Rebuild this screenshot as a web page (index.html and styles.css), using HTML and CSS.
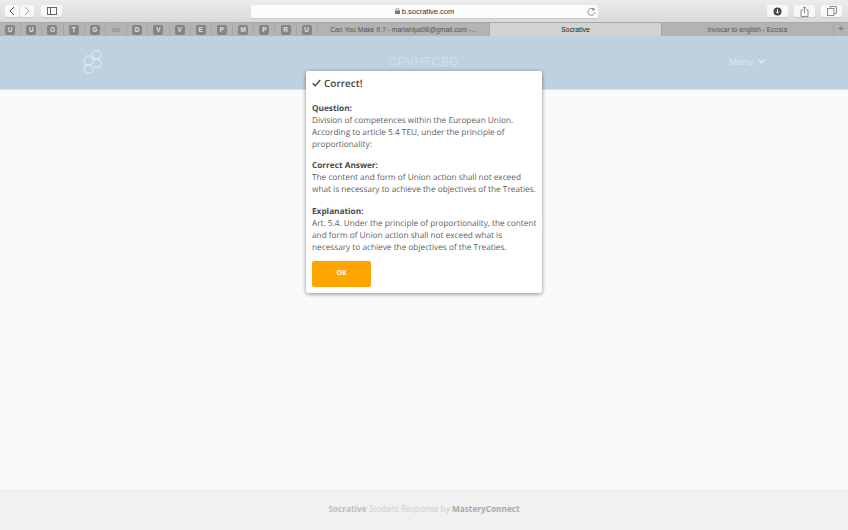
FILE: index.html
```html
<!DOCTYPE html>
<html lang="en">
<head>
    <meta charset="UTF-8">
    <meta name="viewport" content="width=device-width, initial-scale=1.0">
    <title>Socrative</title>
    <link rel="stylesheet" href="styles.css">
</head>
<body>
<div class="toolbar">
    <div class="nav-group">
        <span class="tool-btn nav-btn"><svg width="6" height="10" viewBox="0 0 6 10"><path d="M5 1L1 5l4 4" fill="none" stroke="#555" stroke-width="1"/></svg></span>
        <span class="tool-btn nav-btn"><svg width="6" height="10" viewBox="0 0 6 10"><path d="M1 1l4 4-4 4" fill="none" stroke="#aaa" stroke-width="1"/></svg></span>
    </div>
    <span class="tool-btn sidebar-btn"><svg width="10" height="8" viewBox="0 0 10 8"><rect x=".5" y=".5" width="9" height="7" fill="none" stroke="#666"/><path d="M3.5 .5v7" stroke="#666"/></svg></span>
    <div class="address">
        <span class="address-text"><svg class="lock" width="5" height="6" viewBox="0 0 5 6"><rect y="2.500" width="5" height="3.500" fill="#777"/><path d="M1 3V1.600a1.500 1.500 0 0 1 3 0V3" fill="none" stroke="#777" stroke-width=".7"/></svg>b.socrative.com</span>
        <svg class="reload" width="9" height="9" viewBox="0 0 9 9"><path d="M7.600 3.200A3.500 3.500 0 1 0 8 5" fill="none" stroke="#777" stroke-width=".8"/><path d="M6.300 .6l1.500 2.600-2.700.2z" fill="#777"/></svg>
    </div>
    <div class="tool-right">
        <span class="tool-btn right-btn"><svg width="9" height="9" viewBox="0 0 9 9"><circle cx="4.500" cy="4.500" r="4" fill="#444"/><path d="M4.500 2v4M3 4.600l1.500 1.600L6 4.600" fill="none" stroke="#fff"/></svg></span>
        <span class="tool-btn right-btn"><svg width="9" height="11" viewBox="0 0 9 11"><path d="M3 4H1v6.500h7V4H6M4.500 7V.8M3 2.200L4.500 .8 6 2.200" fill="none" stroke="#777" stroke-width=".8"/></svg></span>
        <span class="tool-btn right-btn"><svg width="10" height="10" viewBox="0 0 10 10"><rect x=".5" y="2.500" width="6.500" height="7" fill="none" stroke="#777" stroke-width=".8"/><path d="M3 2.500V.5h6.500v7H7" fill="none" stroke="#777" stroke-width=".8"/></svg></span>
    </div>
</div>

<div class="tabbar">
    <div class="pinned">
        <span class="pin"><b>U</b></span>
        <span class="pin"><b>U</b></span>
        <span class="pin"><b>O</b></span>
        <span class="pin"><b>T</b></span>
        <span class="pin"><b>G</b></span>
        <span class="pin"><i>we</i></span>
        <span class="pin"><b>D</b></span>
        <span class="pin"><b>V</b></span>
        <span class="pin"><b>V</b></span>
        <span class="pin"><b>E</b></span>
        <span class="pin"><b>P</b></span>
        <span class="pin"><b>M</b></span>
        <span class="pin"><b>P</b></span>
        <span class="pin"><b>R</b></span>
        <span class="pin"><b>U</b></span>
    </div>
    <div class="tab">Can You Make It ? - mariahipa98@gmail.com -...</div>
    <div class="tab tab-active">Socrative</div>
    <div class="tab">invocar to english - Ecosia</div>
    <div class="tab-add">+</div>
</div>

<div class="page">
    <header class="site-header">
        <svg class="logo" width="22" height="25" viewBox="0 0 22 25">
            <g fill="none" stroke="#e4ebf1" stroke-width="1.300" stroke-dasharray="1.600 .6">
                <path d="M12 1.500h4.500l3 4-2.500 4.500h-5l-2.500-4.500z"/>
                <path d="M4 7h5l2.500 4.500L9 16H4l-2.500-4.500z"/>
                <path d="M12 10h5l2.500 4-2.500 4.500h-5"/>
                <path d="M4 16h5l2.500 4L9 24H4l-2.500-4z"/>
            </g>
        </svg>
        <div class="room-name">CPVHFCBG</div>
        <div class="menu">Menu <svg width="7" height="5" viewBox="0 0 7 5"><path d="M.8 1l2.700 2.700L6.200 1" fill="none" stroke="#e4ebf1" stroke-width="1.400"/></svg></div>
    </header>
    <main class="content"></main>
    <footer class="site-footer"><b>Socrative</b> Student Response by <b class="dark">MasteryConnect</b></footer>

    <div class="modal">
        <h2 class="modal-title"><svg width="9" height="8" viewBox="0 0 9 8"><path d="M.7 4.200l2.500 2.600L8.300 1" fill="none" stroke="#444" stroke-width="1.300"/></svg>Correct!</h2>
        <p class="block"><strong>Question:</strong><br>Division of competences within the European Union. According to article 5.4 TEU, under the principle of proportionality:</p>
        <p class="block"><strong>Correct Answer:</strong><br>The content and form of Union action shall not exceed what is necessary to achieve the objectives of the Treaties.</p>
        <p class="block block-last"><strong>Explanation:</strong><br>Art. 5.4. Under the principle of proportionality, the content and form of Union action shall not exceed what is necessary to achieve the objectives of the Treaties.</p>
        <div class="ok-btn">OK</div>
    </div>
</div>
</body>
</html>
```

FILE: styles.css
```css
html, body {
    height: 100%;
}

body {
    margin: 0;
    display: flex;
    flex-direction: column;
    overflow: hidden;
    background: #fafafa;
    font-family: "Open Sans", "Liberation Sans", sans-serif;
}

.toolbar {
    height: 22px;
    display: flex;
    align-items: center;
    padding: 0 5px;
    background: linear-gradient(#ececec, #d9d9d9);
    box-sizing: border-box;
}

.tool-btn {
    display: flex;
    justify-content: center;
    align-items: center;
    height: 12px;
    background: #f8f8f8;
    border-radius: 2px;
    box-shadow: 0 1px 0 #c8c8c8;
}

.nav-group {
    display: flex;
    gap: 1px;
}

.nav-btn {
    width: 14px;
}

.sidebar-btn {
    width: 21px;
    margin-left: 7px;
}

.address {
    width: 347px;
    height: 13px;
    margin-left: 189px;
    position: relative;
    display: flex;
    justify-content: center;
    align-items: center;
    background: #fcfcfc;
    border-radius: 2px;
    box-shadow: 0 1px 0 #cdcdcd;
}

.address-text {
    font-family: "Liberation Sans", sans-serif;
    font-size: 7.500px;
    color: #333;
    display: flex;
    align-items: center;
    gap: 2px;
}

.reload {
    position: absolute;
    right: 2px;
    top: 2px;
}

.tool-right {
    margin-left: auto;
    display: flex;
    gap: 6px;
    padding-right: 1px;
}

.right-btn {
    width: 21px;
}

.tabbar {
    height: 14px;
    display: flex;
    background: #b3b3b3;
    border-top: 1px solid #a9a9a9;
    box-sizing: border-box;
    font-family: "Liberation Sans", sans-serif;
}

.pinned {
    width: 318px;
    display: flex;
}

.pin {
    width: 21.200px;
    display: flex;
    justify-content: center;
    align-items: center;
    border-right: 1px solid #a6a6a6;
    box-sizing: border-box;
}

.pin b {
    width: 10px;
    height: 10px;
    border-radius: 2px;
    background: #858585;
    color: #e2e2e2;
    font-size: 6.500px;
    line-height: 10px;
    text-align: center;
}

.pin i {
    font-style: normal;
    font-size: 7px;
    color: #8a8a8a;
}

.tab {
    flex: 0 0 172px;
    font-size: 6.800px;
    line-height: 13px;
    text-align: center;
    color: #555;
    border-right: 1px solid #a6a6a6;
    box-sizing: border-box;
}

.tab-active {
    background: #d2d2d2;
    color: #222;
}

.tab-add {
    flex: 1;
    text-align: center;
    font-size: 10px;
    line-height: 12px;
    color: #777;
}

.page {
    flex: 1;
    display: flex;
    flex-direction: column;
    position: relative;
}

.site-header {
    height: 54px;
    display: grid;
    grid-template-columns: 1fr auto 1fr;
    align-items: center;
    padding: 0 83px 2px 82px;
    background: #bfd1e0;
    border-bottom: 1px solid #d5e0ea;
    box-sizing: border-box;
}

.room-name {
    font-family: Inter, "Liberation Sans", sans-serif;
    font-size: 12px;
    letter-spacing: .5px;
    color: #d3dfe9;
}

.menu {
    justify-self: end;
    display: flex;
    align-items: center;
    gap: 5px;
    font-size: 9px;
    color: #dfe7ee;
}

.content {
    flex: 1;
}

.site-footer {
    height: 41px;
    background: #f1f1f1;
    font-size: 8.250px;
    line-height: 40px;
    text-align: center;
    color: #cdcdcd;
}

.site-footer b {
    color: #bdbdbd;
}

.site-footer .dark {
    color: #a9a9a9;
}

/* sits over the header, like the real dialog */
.modal {
    position: absolute;
    top: 35px;
    left: 306px;
    width: 236px;
    height: 222px;
    padding: 5px 5px 6px 6px;
    box-sizing: border-box;
    background: #fff;
    border-radius: 2px;
    box-shadow: 0 1px 4px rgba(0, 0, 0, 0.45);
    color: #5f5f5f;
    font-size: 8.250px;
    line-height: 12.100px;
    text-rendering: geometricPrecision;
}

.modal-title {
    display: flex;
    align-items: center;
    gap: 3px;
    margin: 0 0 12.500px;
    font-size: 10px;
    line-height: 14px;
    font-weight: 600;
    color: #444;
}

.block {
    margin: 0 0 9.200px;
}

.block-last {
    margin-bottom: 7.200px;
}

.block strong {
    font-weight: 700;
    color: #4a4a4a;
}

.ok-btn {
    width: 59px;
    height: 26px;
    background: #ffa500;
    border-radius: 2px;
    color: #fff;
    font-size: 7px;
    font-weight: 700;
    line-height: 26px;
    text-align: center;
}
```
